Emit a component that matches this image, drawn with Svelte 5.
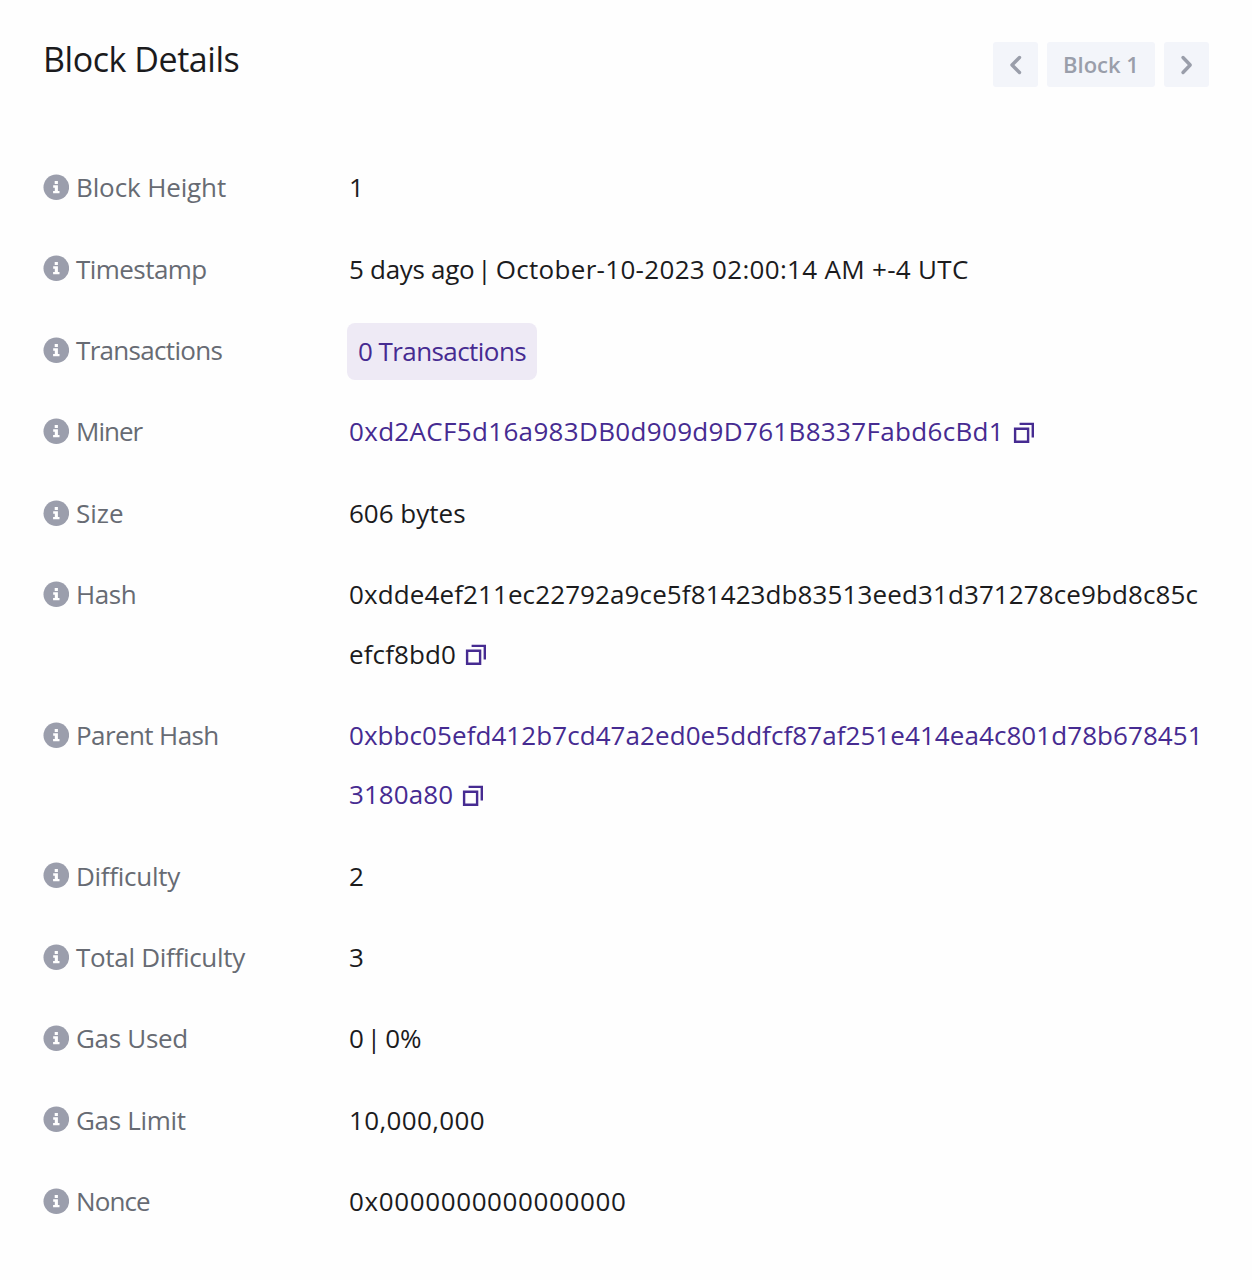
<script lang="ts">
  type Row = {
    label: string;
    values: string[];
    link?: boolean;
    copy?: boolean;
    badge?: boolean;
    labelTracking?: number;
    tracking?: number[];
  };

  // several values in one row are separated by a pipe
  const rows: Row[] = [
    { label: 'Block Height', values: ['1'], labelTracking: -0.12 },
    {
      label: 'Timestamp',
      values: ['5 days ago', 'October-10-2023 02:00:14 AM +-4 UTC'],
      labelTracking: -0.55,
      tracking: [-0.3, 0.31]
    },
    { label: 'Transactions', values: ['0 Transactions'], badge: true, labelTracking: -0.68, tracking: [-0.57] },
    {
      label: 'Miner',
      values: ['0xd2ACF5d16a983DB0d909d9D761B8337Fabd6cBd1'],
      link: true,
      copy: true,
      labelTracking: -1,
      tracking: [0.33]
    },
    { label: 'Size', values: ['606 bytes'] },
    {
      label: 'Hash',
      values: ['0xdde4ef211ec22792a9ce5f81423db83513eed31d371278ce9bd8c85cefcf8bd0'],
      copy: true,
      labelTracking: -0.4,
      tracking: [0.11]
    },
    {
      label: 'Parent Hash',
      values: ['0xbbc05efd412b7cd47a2ed0e5ddfcf87af251e414ea4c801d78b6784513180a80'],
      link: true,
      copy: true,
      labelTracking: -0.6,
      tracking: [0.07]
    },
    { label: 'Difficulty', values: ['2'], labelTracking: -0.28 },
    { label: 'Total Difficulty', values: ['3'], labelTracking: -0.3 },
    { label: 'Gas Used', values: ['0', '0%'], labelTracking: -0.3 },
    { label: 'Gas Limit', values: ['10,000,000'], labelTracking: -0.3, tracking: [0.35] },
    { label: 'Nonce', values: ['0x0000000000000000'], labelTracking: -0.9, tracking: [0.62] }
  ];
</script>

<main class="card">
  <header class="header">
    <h1>Block Details</h1>
    <nav class="pager">
      <button class="arrow" aria-label="Previous block">
        <svg width="14" height="20" viewBox="0 0 14 20"><path d="M10.5 2.5 3 10l7.5 7.5" /></svg>
      </button>
      <span class="current">Block 1</span>
      <button class="arrow" aria-label="Next block">
        <svg width="14" height="20" viewBox="0 0 14 20"><path d="M3 2.5 10.2 10 3 17.5" /></svg>
      </button>
    </nav>
  </header>

  <dl class="details">
    {#each rows as row}
      <div class="row">
        <dt>
          <svg class="info" width="26" height="26" viewBox="0 0 26 26">
            <circle cx="13.3" cy="13.2" r="12.8" />
            <path d="M11.7 7h3.2v2.9h-3.2zM10.2 11.3h4.7v5.6h1.6v2.4h-6.4v-2.4h1.7v-3.2h-1.6z" />
          </svg>
          <span style:letter-spacing="{row.labelTracking ?? 0}px">{row.label}</span>
        </dt>
        <dd class:link={row.link}>
          {#each row.values as value, i}
            {#if i > 0}{' '}<span class="pipe">|</span>{/if}
            <span class:badge={row.badge} style:letter-spacing="{row.tracking?.[i] ?? 0}px">{value}</span>
          {/each}
          {#if row.copy}
            <svg class="copy" width="22" height="22" viewBox="0 0 22 22">
              <path d="M2.1 6.8h13v13h-13zM6.6 1.9h13.2v13.6" />
            </svg>
          {/if}
        </dd>
      </div>
    {/each}
  </dl>
</main>

<style>
  :global(body) {
    background: #fefefe;
  }

  .card {
    box-sizing: border-box;
    min-height: 1280px;
    padding: 42px 43px 0;
    font-family: 'Open Sans', 'Noto Sans', sans-serif;
    font-size: 26px;
    color: #1b1b1d;
  }

  .header {
    display: flex;
    justify-content: space-between;
    height: 105.3px;
  }

  h1 {
    margin: 0;
    font-size: 34px;
    font-weight: 400;
    line-height: 34px;
    letter-spacing: -0.45px;
  }

  .pager {
    display: flex;
    gap: 9px;
    height: 45px;
  }

  .arrow,
  .current {
    display: flex;
    align-items: center;
    justify-content: center;
    box-sizing: border-box;
    border: 0;
    border-radius: 3px;
    background: #f3f5fa;
    color: #9a9eaa;
  }

  .arrow {
    width: 45px;
    padding: 0;
  }

  .arrow path {
    fill: none;
    stroke: currentColor;
    stroke-width: 3.4;
    stroke-linecap: round;
    stroke-linejoin: round;
  }

  .current {
    width: 108px;
    padding-bottom: 2px;
    font-size: 22px;
    font-weight: 600;
    white-space: nowrap;
  }

  .details {
    margin: 0;
  }

  .row {
    display: grid;
    grid-template-columns: 306px 1fr;
    padding: 11px 0 11.1px;
    line-height: 59.3px;
  }

  dt {
    display: flex;
    align-items: center;
    gap: 7px;
    height: 59.3px;
    color: #676b73;
    white-space: nowrap;
  }

  .info {
    flex: none;
    margin-top: -2px;
    fill: #9b9eac;
  }

  .info path {
    fill: #fff;
  }

  dd {
    margin: 0;
    word-break: break-all;
  }

  .pipe {
    margin: 0 -2.5px 0 -4px;
  }

  .link,
  .badge {
    color: #462b91;
  }

  .badge {
    display: block;
    box-sizing: border-box;
    width: 190px;
    height: 57px;
    margin: 1.6px 0 0.7px -2px;
    padding-left: 11px;
    border-radius: 8px;
    background: #eeeaf5;
    line-height: 56px;
    white-space: nowrap;
  }

  .copy {
    margin-left: 2px;
    vertical-align: -2.4px;
    fill: none;
    stroke: #462b91;
    stroke-width: 2.4;
  }
</style>
